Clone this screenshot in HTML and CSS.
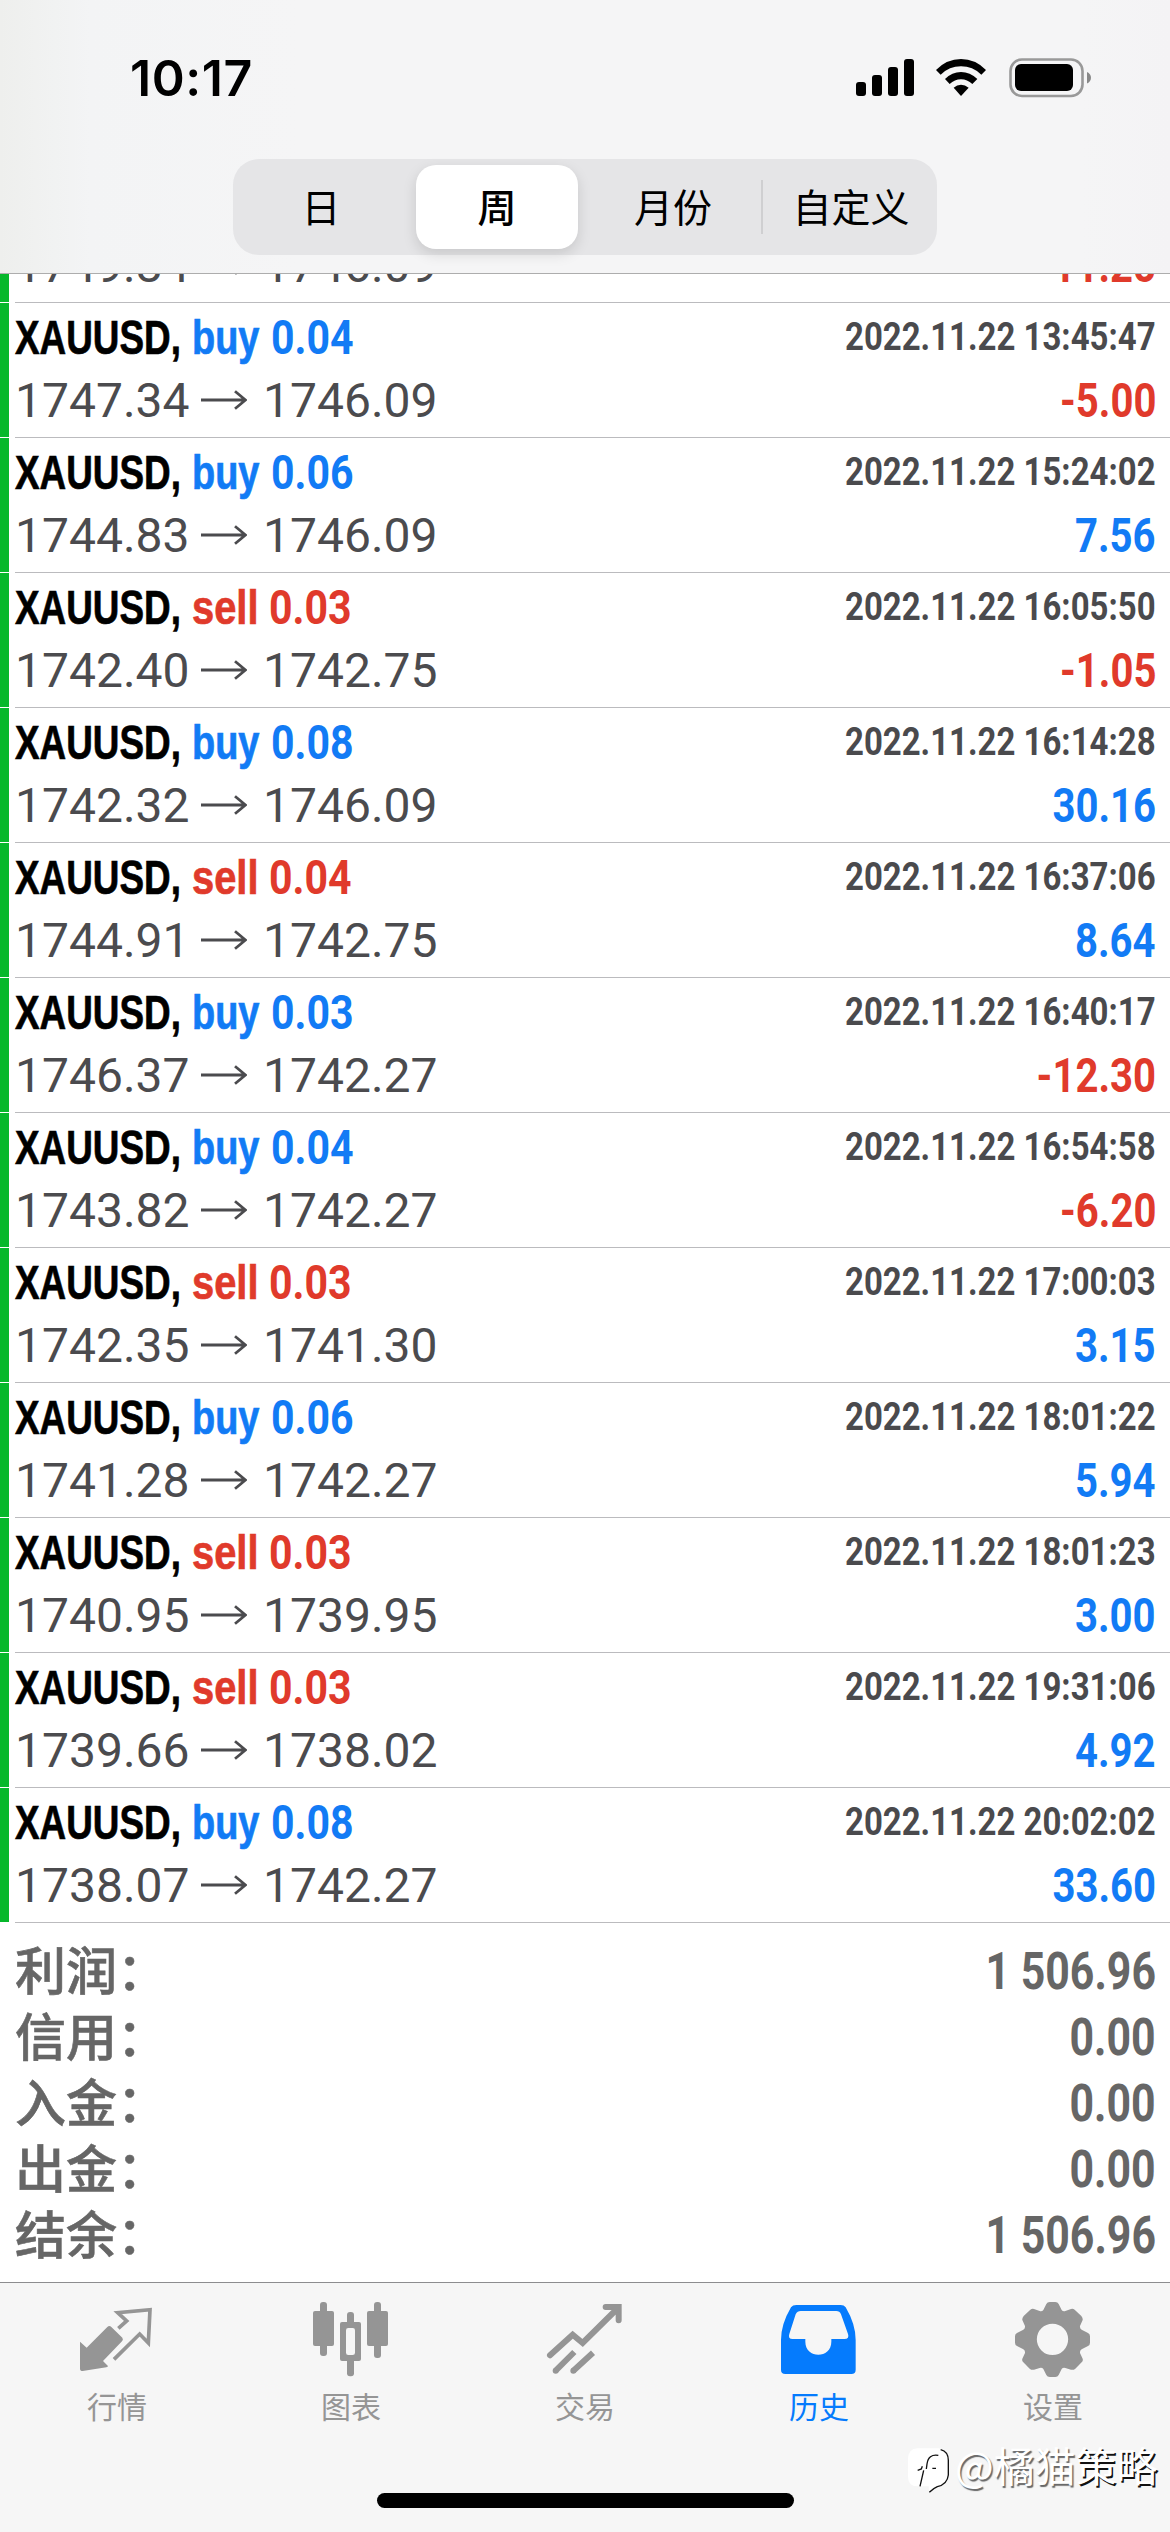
FILE: index.html
```html
<!DOCTYPE html>
<html lang="zh-CN">
<head>
<meta charset="utf-8">
<title>历史</title>
<link rel="stylesheet" href="styles.css">
</head>
<body>
<svg class="defs" width="0" height="0">
  <symbol id="arrow" viewBox="0 0 46 20"><path d="M0 10H44.5M34 1.2L44.5 10L34 18.8" fill="none" stroke="currentColor" stroke-width="2.8"/></symbol>
</svg>
<div class="screen">
  <header class="header">
    <div class="status">
      <span class="clock">10:17</span>
      <div class="status-icons">
        <svg class="signal" width="58" height="37" viewBox="0 0 58 37"><rect y="23" width="10" height="14" rx="3"/><rect x="16" y="16" width="10" height="21" rx="3"/><rect x="32" y="8" width="10" height="29" rx="3"/><rect x="48" width="10" height="37" rx="3"/></svg>
        <svg class="wifi" width="50" height="37" viewBox="0 0 150 111"><path d="M0 33Q32 0 75 0T150 33L136 47Q110 22 75 22T14 47Z"/><path d="M27 60Q48 39 75 39T124 60L109 75Q94 61 75 61T41 75Z"/><path d="M53 86Q63 77 75 77T98 86L75 111Z"/></svg>
        <svg class="battery" width="82" height="40" viewBox="0 0 82 40"><rect x="1.5" y="1.5" width="72" height="36.5" rx="11.5" fill="none" stroke="#999" stroke-width="2.6"/><rect x="6" y="6" width="58" height="27" rx="6"/><path d="M78 14Q82 16 82 19.8T78 25.6Z" fill="#888"/></svg>
      </div>
    </div>
    <nav class="segments">
      <span class="segment">日</span>
      <span class="segment segment-on">周</span>
      <span class="segment">月份</span>
      <span class="segment segment-divided">自定义</span>
    </nav>
  </header>

  <main class="deals">
    <article class="deal">
      <div class="line"><span class="symbol">XAUUSD,</span><span class="side buy">buy</span><span class="lots buy">0.03</span><time>2022.11.22 13:44:12</time></div>
      <div class="line prices"><span>1749.84</span><svg class="arrow"><use href="#arrow"/></svg><span>1746.09</span><b class="loss">-11.25</b></div>
    </article>
    <article class="deal">
      <div class="line"><span class="symbol">XAUUSD,</span><span class="side buy">buy</span><span class="lots buy">0.04</span><time>2022.11.22 13:45:47</time></div>
      <div class="line prices"><span>1747.34</span><svg class="arrow"><use href="#arrow"/></svg><span>1746.09</span><b class="loss">-5.00</b></div>
    </article>
    <article class="deal">
      <div class="line"><span class="symbol">XAUUSD,</span><span class="side buy">buy</span><span class="lots buy">0.06</span><time>2022.11.22 15:24:02</time></div>
      <div class="line prices"><span>1744.83</span><svg class="arrow"><use href="#arrow"/></svg><span>1746.09</span><b class="gain">7.56</b></div>
    </article>
    <article class="deal">
      <div class="line"><span class="symbol">XAUUSD,</span><span class="side sell">sell</span><span class="lots sell">0.03</span><time>2022.11.22 16:05:50</time></div>
      <div class="line prices"><span>1742.40</span><svg class="arrow"><use href="#arrow"/></svg><span>1742.75</span><b class="loss">-1.05</b></div>
    </article>
    <article class="deal">
      <div class="line"><span class="symbol">XAUUSD,</span><span class="side buy">buy</span><span class="lots buy">0.08</span><time>2022.11.22 16:14:28</time></div>
      <div class="line prices"><span>1742.32</span><svg class="arrow"><use href="#arrow"/></svg><span>1746.09</span><b class="gain">30.16</b></div>
    </article>
    <article class="deal">
      <div class="line"><span class="symbol">XAUUSD,</span><span class="side sell">sell</span><span class="lots sell">0.04</span><time>2022.11.22 16:37:06</time></div>
      <div class="line prices"><span>1744.91</span><svg class="arrow"><use href="#arrow"/></svg><span>1742.75</span><b class="gain">8.64</b></div>
    </article>
    <article class="deal">
      <div class="line"><span class="symbol">XAUUSD,</span><span class="side buy">buy</span><span class="lots buy">0.03</span><time>2022.11.22 16:40:17</time></div>
      <div class="line prices"><span>1746.37</span><svg class="arrow"><use href="#arrow"/></svg><span>1742.27</span><b class="loss">-12.30</b></div>
    </article>
    <article class="deal">
      <div class="line"><span class="symbol">XAUUSD,</span><span class="side buy">buy</span><span class="lots buy">0.04</span><time>2022.11.22 16:54:58</time></div>
      <div class="line prices"><span>1743.82</span><svg class="arrow"><use href="#arrow"/></svg><span>1742.27</span><b class="loss">-6.20</b></div>
    </article>
    <article class="deal">
      <div class="line"><span class="symbol">XAUUSD,</span><span class="side sell">sell</span><span class="lots sell">0.03</span><time>2022.11.22 17:00:03</time></div>
      <div class="line prices"><span>1742.35</span><svg class="arrow"><use href="#arrow"/></svg><span>1741.30</span><b class="gain">3.15</b></div>
    </article>
    <article class="deal">
      <div class="line"><span class="symbol">XAUUSD,</span><span class="side buy">buy</span><span class="lots buy">0.06</span><time>2022.11.22 18:01:22</time></div>
      <div class="line prices"><span>1741.28</span><svg class="arrow"><use href="#arrow"/></svg><span>1742.27</span><b class="gain">5.94</b></div>
    </article>
    <article class="deal">
      <div class="line"><span class="symbol">XAUUSD,</span><span class="side sell">sell</span><span class="lots sell">0.03</span><time>2022.11.22 18:01:23</time></div>
      <div class="line prices"><span>1740.95</span><svg class="arrow"><use href="#arrow"/></svg><span>1739.95</span><b class="gain">3.00</b></div>
    </article>
    <article class="deal">
      <div class="line"><span class="symbol">XAUUSD,</span><span class="side sell">sell</span><span class="lots sell">0.03</span><time>2022.11.22 19:31:06</time></div>
      <div class="line prices"><span>1739.66</span><svg class="arrow"><use href="#arrow"/></svg><span>1738.02</span><b class="gain">4.92</b></div>
    </article>
    <article class="deal">
      <div class="line"><span class="symbol">XAUUSD,</span><span class="side buy">buy</span><span class="lots buy">0.08</span><time>2022.11.22 20:02:02</time></div>
      <div class="line prices"><span>1738.07</span><svg class="arrow"><use href="#arrow"/></svg><span>1742.27</span><b class="gain">33.60</b></div>
    </article>
  </main>

  <section class="summary">
    <div class="total"><span>利润：</span><b>1 506.96</b></div>
    <div class="total"><span>信用：</span><b>0.00</b></div>
    <div class="total"><span>入金：</span><b>0.00</b></div>
    <div class="total"><span>出金：</span><b>0.00</b></div>
    <div class="total"><span>结余：</span><b>1 506.96</b></div>
  </section>

  <footer class="footer">
    <nav class="tabs">
      <a class="tab">
        <svg viewBox="45 21 252 252"><path d="M60 155L80 173L142 111Q148 105 154 111L187 143Q191 149 186 154L129 213L144 228Q144 231 139 232L68 243Q60 243 60 236Z" fill="currentColor"/><path d="M175 115L200 93L173 68L270 59L265 159L239 132L162 208" fill="none" stroke="currentColor" stroke-width="11"/></svg>
        <span>行情</span>
      </a>
      <a class="tab">
        <svg viewBox="747 21 252 252" fill="currentColor"><rect x="780" y="36" width="21" height="162" rx="9"/><rect x="759" y="63" width="63" height="105" rx="6"/><rect x="942" y="36" width="21" height="168" rx="9"/><rect x="921" y="63" width="63" height="105" rx="6"/><rect x="861" y="66" width="21" height="193" rx="9"/><rect x="840" y="96" width="63" height="117" rx="6"/><rect x="858" y="114" width="27" height="81" rx="7" fill="#f6f6f6"/></svg>
        <span>图表</span>
      </a>
      <a class="tab">
        <svg viewBox="69 21 252 252" fill="none" stroke="currentColor" stroke-width="18"><path d="M90 196L158 134L188 159L294 54M257 51H296V91" stroke-linecap="round" stroke-linejoin="miter"/><path d="M163 186L107 242M219 188L160 242"/><g fill="currentColor" stroke="none"><circle cx="107" cy="242" r="9"/><circle cx="160" cy="242" r="9"/></g></svg>
        <span>交易</span>
      </a>
      <a class="tab tab-on">
        <svg viewBox="771 21 252 252"><path fill="currentColor" fill-rule="evenodd" d="M829 45H962Q972 45 977 52Q1007 103 1007 150V239Q1007 252 994 252H796Q783 252 783 239V150Q783 103 813 52Q818 45 829 45ZM842 63Q832 63 827 73L808 132Q803 147 818 147H856V155C856 207 934 207 934 155V147H973Q989 147 984 132L963 73Q959 63 949 63Z"/></svg>
        <span>历史</span>
      </a>
      <a class="tab">
        <svg viewBox="363 21 252 252"><path fill="currentColor" fill-rule="evenodd" d="M469 42Q472 36 479 36H496Q503 36 506 42L515 60Q519 65 526 63L543 57Q549 55 554 59L574 78Q579 84 578 90L570 108Q569 115 575 119L594 129Q600 132 600 139V158Q600 165 594 168L575 178Q569 182 570 189L578 206Q580 213 575 217L556 236Q550 241 543 239L526 234Q519 232 515 237L506 255Q503 261 496 261H479Q472 261 469 255L460 237Q456 232 449 234L432 239Q425 241 419 236L400 217Q395 213 397 206L405 189Q406 182 400 178L381 168Q375 165 375 158V139Q375 132 381 129L400 119Q406 115 405 108L397 90Q396 84 401 78L421 59Q426 55 432 57L449 63Q456 65 460 60ZM487.5 101A47 47 0 1 0 487.5 195A47 47 0 1 0 487.5 101Z"/></svg>
        <span>设置</span>
      </a>
    </nav>
    <div class="home-indicator"></div>
    <div class="watermark">
      <svg width="42" height="47" viewBox="0 0 126 141"><path d="M28 4H91Q119 6 119 36V84Q116 111 85 118L63 136L62 118H28Q0 117 0 89V33Q2 6 28 4Z" fill="#fff"/><path d="M98 8Q121 14 121 40V84Q118 112 88 119Q76 124 64 136" fill="none" stroke="#111" stroke-width="4"/><path d="M91 25Q61 20 57 51L55 66M47 70L36 118M29 70L40 66L43 58M73 64H84" fill="none" stroke="#111" stroke-width="4"/></svg>
      <span>@橘猫<i>策略</i></span>
    </div>
  </footer>
</div>
</body>
</html>
```
FILE: styles.css
```css
* { box-sizing: border-box; }

body {
  margin: 0;
  background: #fff;
  font-family: "Liberation Sans", "Noto Sans CJK SC", sans-serif;
}

.defs { position: absolute; }

.screen {
  width: 1170px;
  height: 2532px;
  display: flex;
  flex-direction: column;
  overflow: hidden;
}

/* status bar and period switch */
.header {
  height: 274px;
  flex: none;
  border-bottom: 1px solid #adadad;
  background: linear-gradient(90deg, #eeefed 0, #f3f4f5 90px, #f5f5f6 300px, #f5f5f6 1080px, #f4f3f5 100%);
  display: flex;
  flex-direction: column;
  align-items: center;
}

.status {
  width: 100%;
  height: 159px;
  padding: 0 79px 0 130px;
  display: flex;
  align-items: flex-start;
  justify-content: space-between;
}

.clock {
  margin-top: 48px;
  font: 600 50px/60px Inter, sans-serif;
  letter-spacing: 0.6px;
}

.status-icons {
  margin-top: 58px;
  display: flex;
  align-items: flex-start;
}

.signal { margin: 1px 22px 0 0; }
.wifi { margin: 1px 23px 0 0; }

.segments {
  width: 704px;
  height: 96px;
  padding: 6px 0;
  border-radius: 26px;
  background: #e5e5e7;
  display: grid;
  grid-template-columns: repeat(4, 1fr);
  font: 400 39px/80px "Noto Sans CJK SC", sans-serif;
  text-align: center;
}

.segment-on {
  margin: 0 7px;
  border-radius: 20px;
  background: #fff;
  box-shadow: 0 5px 14px rgba(0, 0, 0, .13);
  font-weight: 500;
}

.segment-divided {
  padding-left: 4px;
  background: linear-gradient(#cfcfd1, #cfcfd1) left center / 2px 54px no-repeat;
}

/* closed deals */
.deals {
  height: 1649px;
  flex: none;
  display: flex;
  flex-direction: column;
  justify-content: flex-end;
  overflow: hidden;
}

.deal {
  height: 135px;
  flex: none;
  padding: 4px 14px 0 15px;
  background:
    linear-gradient(#bbbbbe, #bbbbbe) 15px 134px / 1155px 1px no-repeat,
    linear-gradient(#06b82b, #06b82b) 0 0 / 9px 134px no-repeat;
}

.line {
  height: 62px;
  display: flex;
  font-size: 48px;
  line-height: 62px;
  white-space: nowrap;
}

.line b, time { margin-left: auto; }

.symbol, .side, .lots {
  font-weight: 700;
  transform-origin: left;
}

.symbol, .side { -webkit-text-stroke: .7px currentColor; }
.symbol { width: 177px; transform: scaleX(.768); }
.side { width: 79px; transform: scaleX(.79); }
.side.sell { width: 77px; transform: scaleX(.83); }
.lots { width: 90px; font-family: Roboto, sans-serif; transform: scaleX(.855); }

time {
  color: #4a4a4d;
  font-family: Roboto, sans-serif;
  font-size: 39px;
  font-weight: 700;
  line-height: 60px;
  transform: scaleX(.845);
  transform-origin: right;
}

.buy, .gain { color: #127bf5; }
.sell, .loss { color: #e03a2b; }

.prices {
  color: #4b4b4e;
  font-family: Roboto, sans-serif;
  line-height: 64px;
}

.prices span { width: 173px; }

.prices b {
  transform: scaleX(.835);
  transform-origin: right;
}

.arrow {
  width: 46px;
  height: 20px;
  margin: 21px 16px 0 13px;
}

/* account totals */
.summary {
  height: 359px;
  flex: none;
  padding: 16px 14px 0 15px;
  color: #666;
}

.total {
  height: 66px;
  display: flex;
  justify-content: space-between;
  font-size: 51px;
  line-height: 66px;
}

.total span {
  font: 500 51px/58px "Noto Sans CJK SC", sans-serif;
  -webkit-text-stroke: .6px currentColor;
}

.total b {
  font-family: Roboto, sans-serif;
  transform: scaleX(.84);
  transform-origin: right;
}

/* tab bar */
.footer {
  position: relative;
  height: 250px;
  flex: none;
  border-top: 1px solid #8d8d8f;
  background: #f6f6f6;
  display: flex;
  flex-direction: column;
  align-items: center;
}

.tabs {
  width: 100%;
  height: 210px;
  padding-top: 14px;
  display: grid;
  grid-template-columns: repeat(5, 1fr);
}

.tab {
  display: flex;
  flex-direction: column;
  align-items: center;
  color: #959595;
  font: 400 30px/44px "Noto Sans CJK SC", sans-serif;
}

.tab svg { width: 84px; height: 84px; }
.tab span { margin-top: 2px; }
.tab-on { color: #057bfd; }

.home-indicator {
  width: 417px;
  height: 15px;
  border-radius: 8px;
  background: #000;
}

.watermark {
  position: absolute;
  left: 908px;
  top: 164px;
  display: flex;
  gap: 5px;
  color: #fff;
  font: 400 41px/34px "Noto Sans CJK SC", sans-serif;
  text-shadow: 1.5px 1.5px 1px #666;
}

.watermark i {
  font-style: normal;
  text-shadow: 1.5px 1.5px 0 #111;
}
```
